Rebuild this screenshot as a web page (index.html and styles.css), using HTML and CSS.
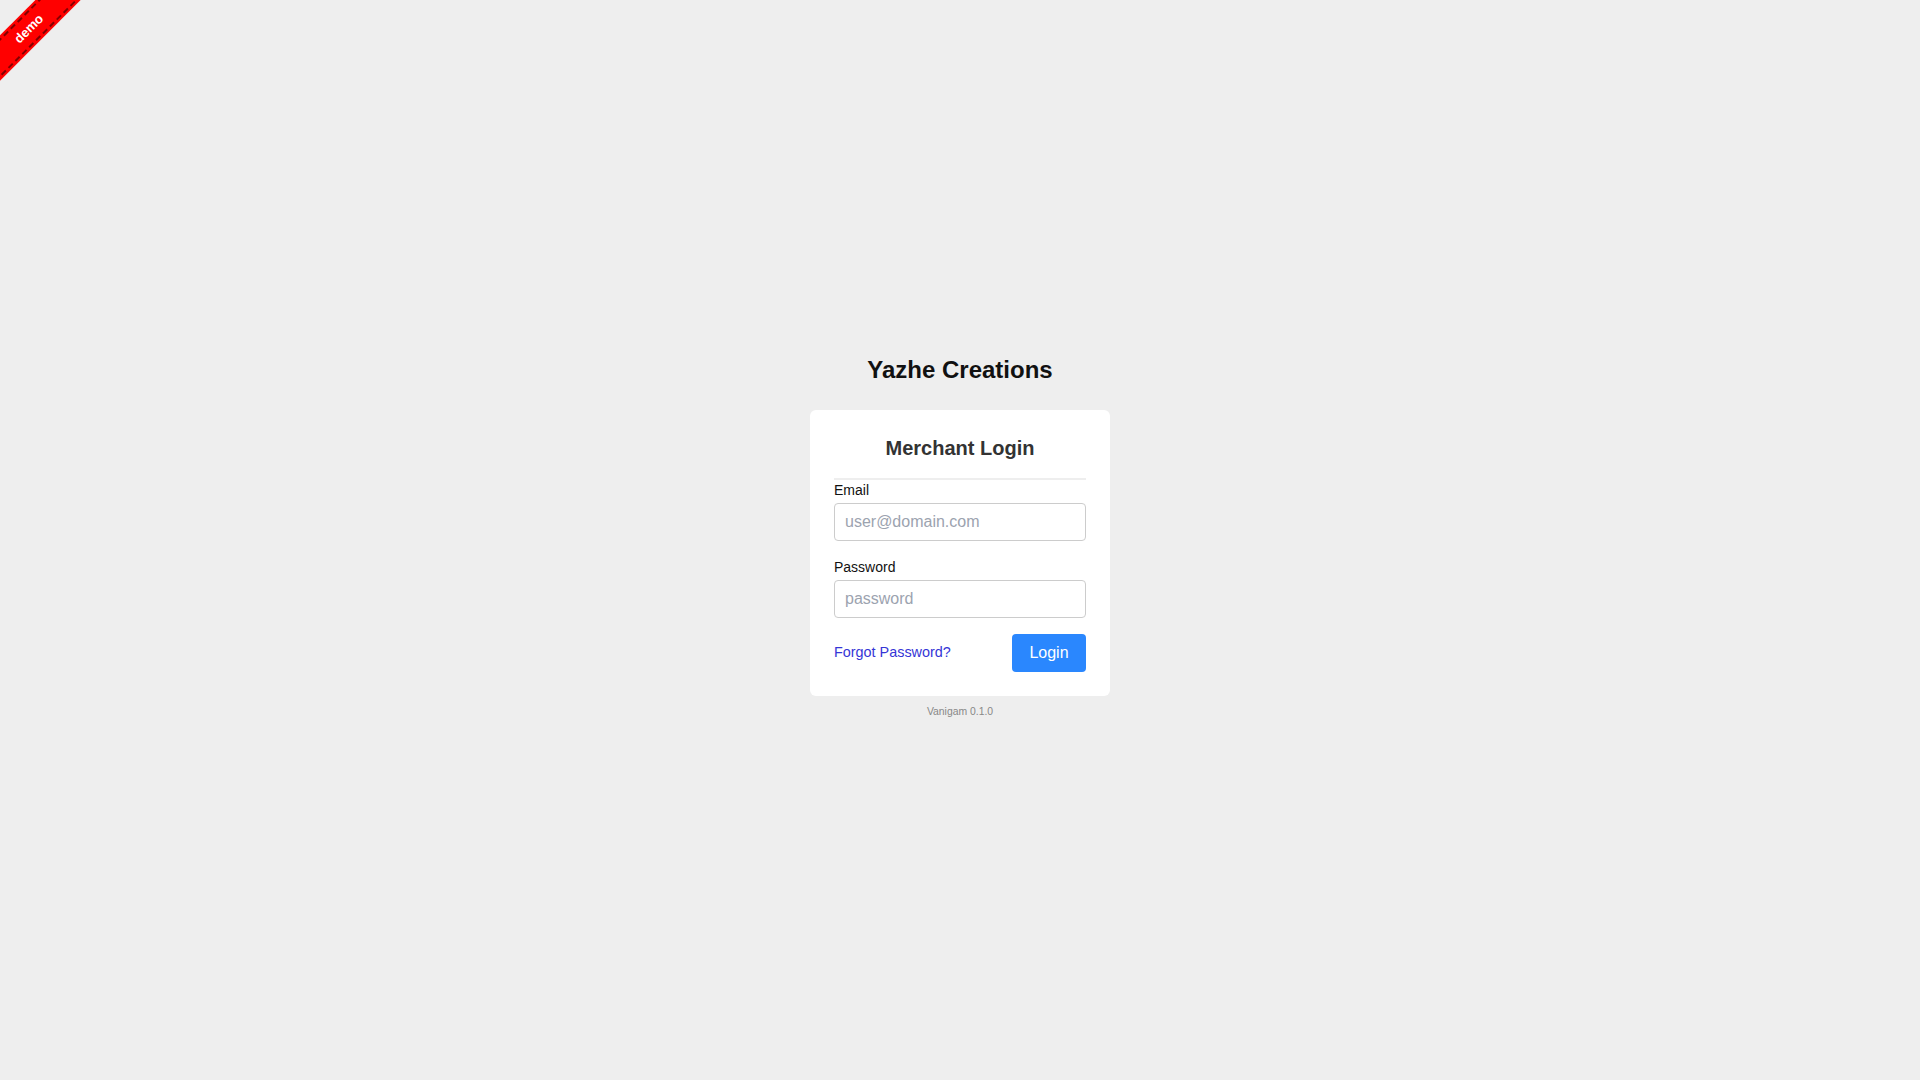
FILE: index.html
```html
<!DOCTYPE html>
<html lang="en">
<head>
<meta charset="utf-8">
<title>Yazhe Creations - Merchant Login</title>
<link rel="stylesheet" href="styles.css">
</head>
<body>
<div class="ribbon"><span class="ribbon-inner">demo</span></div>
<main class="page">
  <h1 class="brand">Yazhe Creations</h1>
  <form class="card">
    <h2 class="card-title">Merchant Login</h2>
    <label class="field-label" for="email">Email</label>
    <input class="field-input" id="email" type="text" placeholder="user@domain.com">
    <label class="field-label field-label-gap" for="password">Password</label>
    <input class="field-input" id="password" type="password" placeholder="password">
    <div class="actions">
      <a class="forgot" href="#">Forgot Password?</a>
      <button class="btn-login" type="button">Login</button>
    </div>
  </form>
  <div class="version">Vanigam 0.1.0</div>
</main>
</body>
</html>
```
FILE: styles.css
```css
html, body {
  margin: 0;
  padding: 0;
}
body {
  background: #eeeeee;
  font-family: "Liberation Sans", Arial, sans-serif;
  color: #111;
  min-height: 100vh;
  overflow: hidden;
  position: relative;
}
.ribbon {
  position: absolute;
  left: -52px;
  top: 13px;
  width: 162px;
  height: 32px;
  background: #ff0000;
  transform: rotate(-45deg);
  box-sizing: border-box;
  padding: 2px 0;
  z-index: 10;
}
.ribbon-inner {
  display: block;
  height: 100%;
  box-sizing: border-box;
  border-top: 2px dashed rgba(90, 0, 0, 0.75);
  border-bottom: 2px dashed rgba(90, 0, 0, 0.75);
  color: #fff;
  font-weight: bold;
  font-size: 13px;
  line-height: 24px;
  text-align: center;
}
.page {
  display: flex;
  flex-direction: column;
  align-items: center;
  padding-top: 356px;
}
.brand {
  margin: 0 0 26px;
  font-size: 24px;
  line-height: 28px;
  font-weight: bold;
  color: #111;
}
.card {
  width: 300px;
  box-sizing: border-box;
  background: #fff;
  border-radius: 6px;
  padding: 24px;
  display: flex;
  flex-direction: column;
  margin: 0;
}
.card-title {
  margin: 0;
  font-size: 20px;
  line-height: 28px;
  font-weight: bold;
  color: #333;
  text-align: center;
  padding-bottom: 16px;
  border-bottom: 2px solid #eeeeee;
}
.field-label {
  display: block;
  font-size: 14px;
  line-height: 20px;
  color: #111;
}
.field-label-gap {
  margin-top: 16px;
}
.field-input {
  margin-top: 3px;
  height: 38px;
  box-sizing: border-box;
  border: 1px solid #cccccc;
  border-radius: 4px;
  padding: 0 10px;
  font-family: "Liberation Sans", Arial, sans-serif;
  font-size: 16px;
  color: #333;
  background: #fff;
  outline: none;
}
.field-input::placeholder {
  color: #9ca3af;
}
.actions {
  margin-top: 16px;
  display: flex;
  justify-content: space-between;
  align-items: center;
}
.forgot {
  font-size: 14.4px;
  line-height: 16px;
  margin-bottom: 2px;
  color: #3535d6;
  text-decoration: none;
}
.btn-login {
  height: 38px;
  width: 74px;
  border: none;
  border-radius: 4px;
  background: #2a87fe;
  color: #fff;
  font-family: "Liberation Sans", Arial, sans-serif;
  font-size: 16px;
  padding: 0;
  cursor: pointer;
}
.version {
  margin-top: 9px;
  font-size: 10.4px;
  line-height: 14px;
  color: #888;
}
```
